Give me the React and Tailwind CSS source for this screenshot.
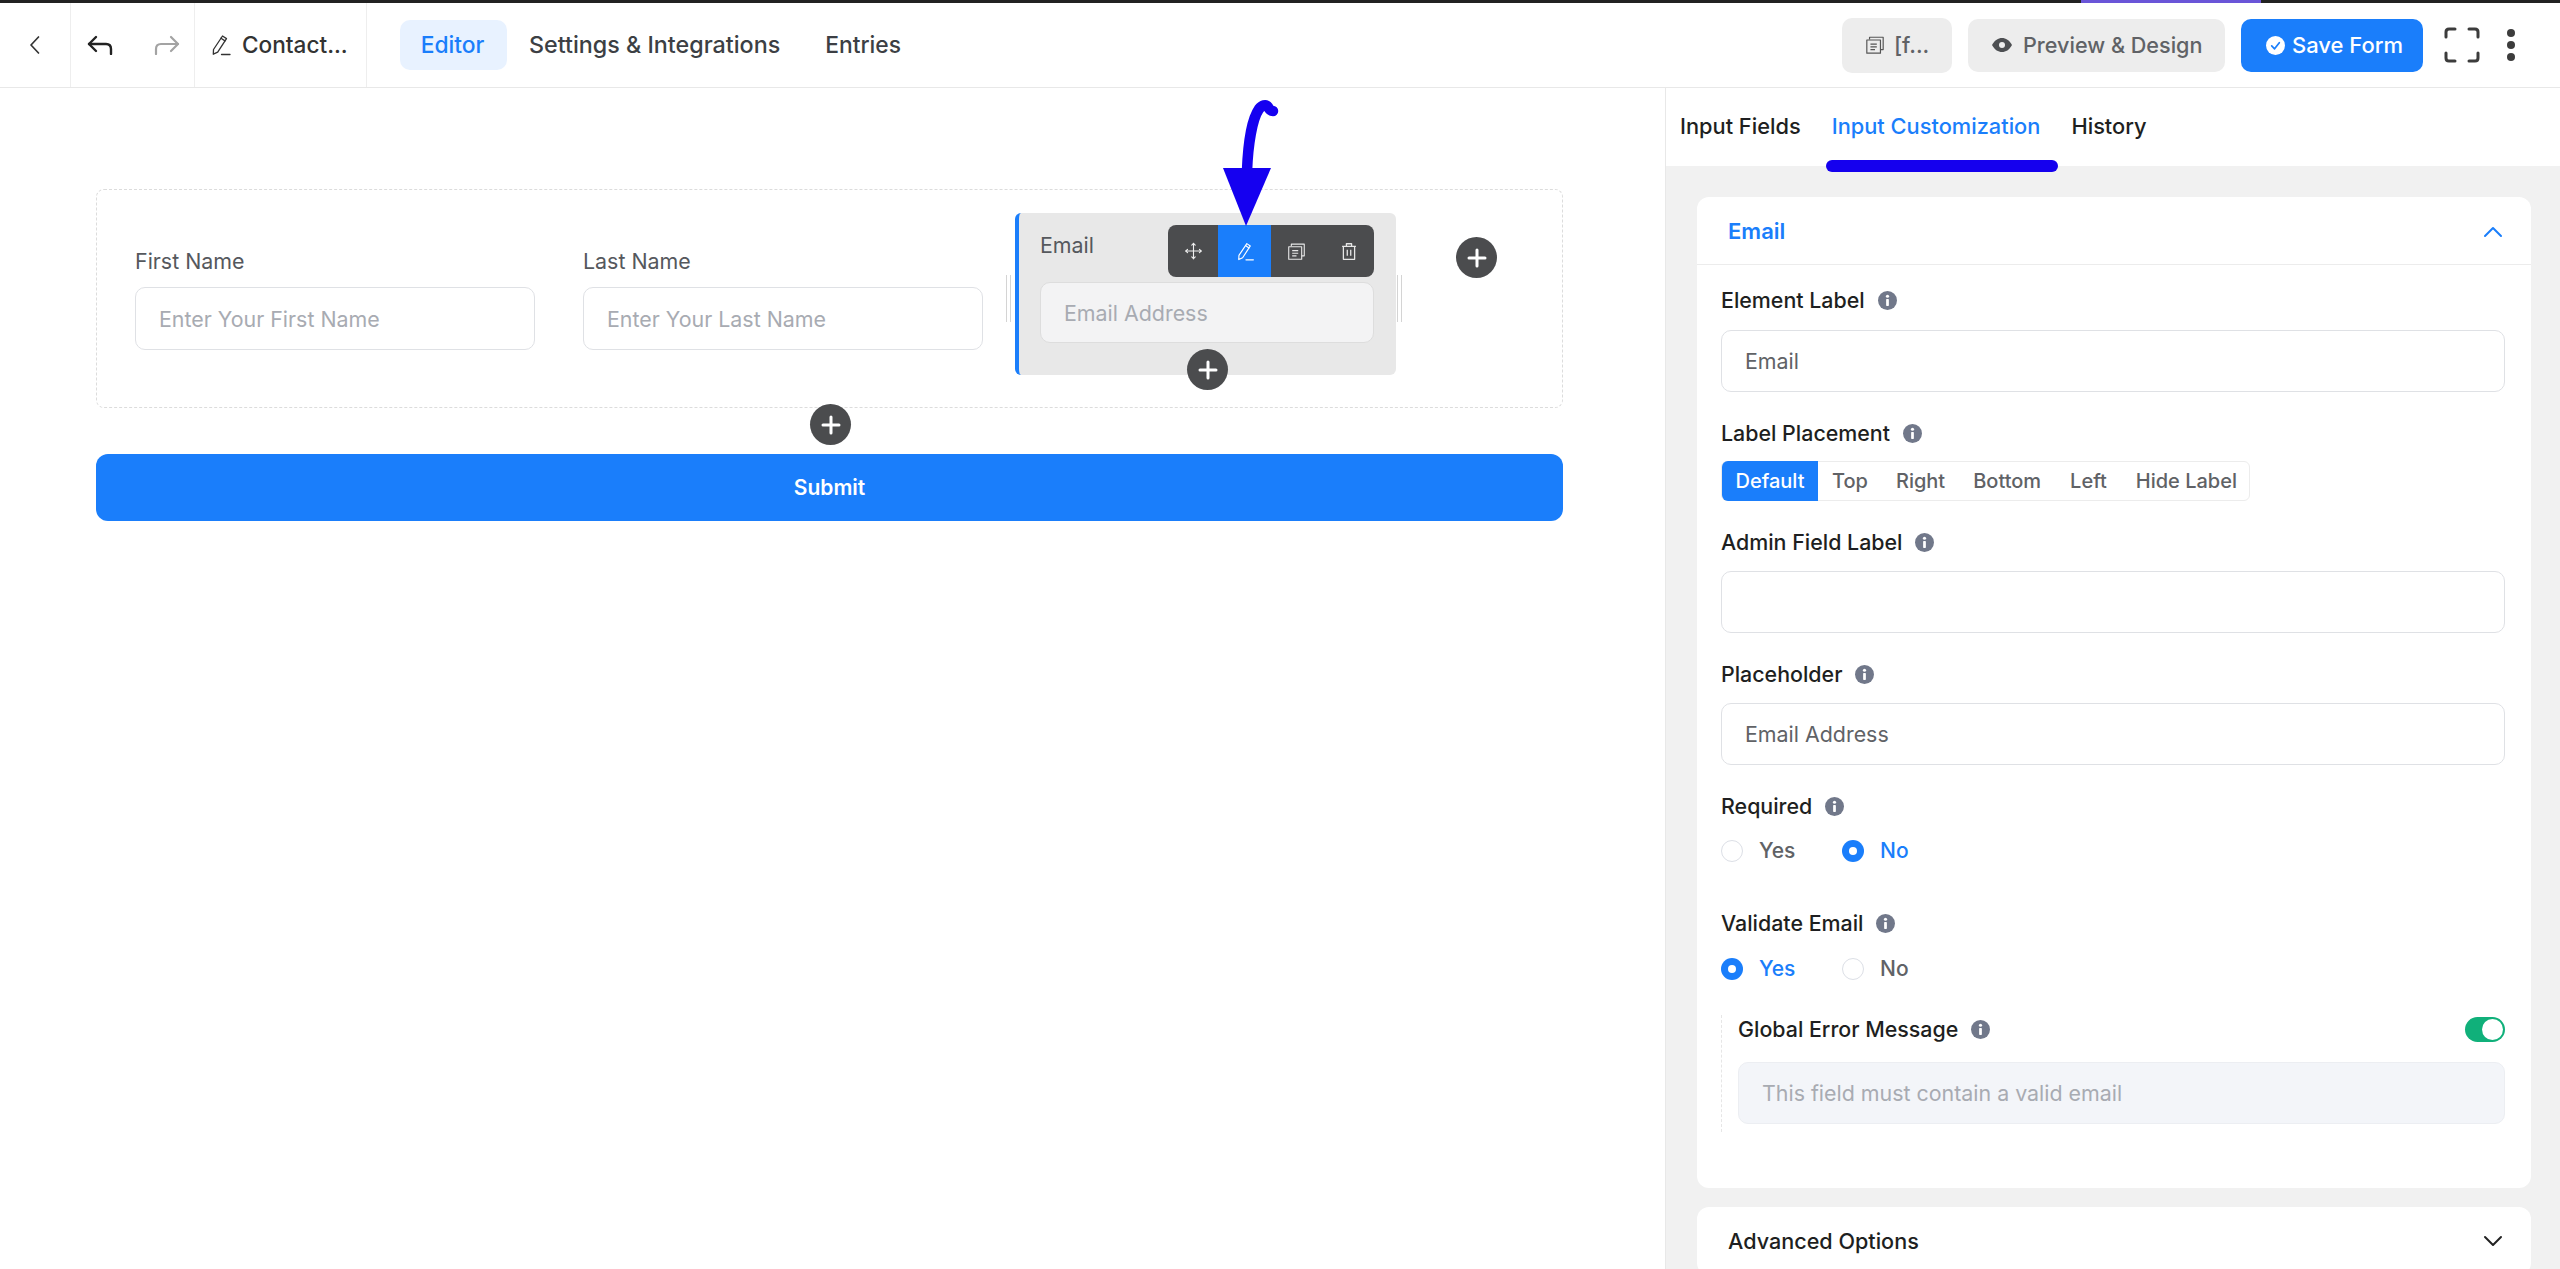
import React from "react";

const Info = () => (
  <svg width="19" height="19" viewBox="0 0 18 18" className="ml-[13px] shrink-0">
    <circle cx="9" cy="9" r="9" fill="#71788a" />
    <circle cx="9" cy="5" r="1.5" fill="#fff" />
    <rect x="7.7" y="7.6" width="2.6" height="6.6" rx="0.6" fill="#fff" />
  </svg>
);

const PencilLine = ({ color = "#333", size = 24 }) => (
  <svg width={size} height={size} viewBox="0 0 24 24" fill="none" stroke={color} strokeWidth="1.3" strokeLinejoin="round" strokeLinecap="round">
    <path d="M4.5 16.5 13.5 3l4 2.6-8.8 13.6-4.4 2z" />
    <path d="M12 5.2l4 2.7" />
    <path d="M12.5 21.5h8.5" />
  </svg>
);

const CopyIcon = ({ color = "#444", size = 22 }) => (
  <svg width={size} height={size} viewBox="0 0 22 22" fill="none" stroke={color} strokeWidth="1.3" strokeLinejoin="round">
    <path d="M5 5V2.5h15V16h-3" />
    <path d="M2 5.5h15V20H2z" />
    <path d="M6 10h7M6 13h7M6 16h5" />
  </svg>
);

const TrashIcon = () => (
  <svg width="18" height="19" viewBox="0 0 20 22" fill="none" stroke="#e6e6e6" strokeWidth="1.5" strokeLinejoin="round">
    <path d="M2 5h16M7 5V2h6v3M3.5 5v15h13V5" />
    <path d="M8 9v7M12 9v7" />
  </svg>
);

const MoveIcon = () => (
  <svg width="17" height="18" viewBox="0 0 20 20" fill="none" stroke="#f0f0f0" strokeWidth="1.3" strokeLinecap="round" strokeLinejoin="round">
    <path d="M10 1v18M1 10h18" />
    <path d="M8 3l2-2 2 2M8 17l2 2 2-2M3 8l-2 2 2 2M17 8l2 2-2 2" />
  </svg>
);

const Plus = ({ className }) => (
  <div className={`absolute flex h-[41px] w-[41px] items-center justify-center rounded-full bg-[#4b4c4e] ${className}`}>
    <svg width="20" height="20" viewBox="0 0 20 20" stroke="#fff" strokeWidth="3" strokeLinecap="round">
      <path d="M10 2v16M2 10h16" />
    </svg>
  </div>
);

const Label = ({ children, className = "" }) => (
  <div className={`flex h-[28px] items-center text-[21.4px] font-medium text-[#1e1f21] ${className}`}>
    {children}
    <Info />
  </div>
);

const Field = ({ children, className = "h-[62px] border-[#dfe1e5] bg-white text-[#606266]" }) => (
  <div className={`flex items-center rounded-[10px] border pl-[23px] pr-[24px] pt-[1px] text-[21.4px] ${className}`}>
    {children}
  </div>
);

const Radio = ({ on, children, w }) => (
  <div className={`flex items-center ${w}`}>
    {on ? (
      <span className="flex h-[22px] w-[22px] items-center justify-center rounded-full bg-[#1a7efb]">
        <span className="h-[8px] w-[8px] rounded-full bg-white" />
      </span>
    ) : (
      <span className="h-[22px] w-[22px] rounded-full border border-[#dcdfe6] bg-white" />
    )}
    <span className={`ml-[16px] text-[21px] font-medium ${on ? "text-[#1a7efb]" : "text-[#606266]"}`}>{children}</span>
  </div>
);

const NameField = ({ label, placeholder }) => (
  <div className="w-[400px] pt-[34px]">
    <div className="flex h-[28px] items-center text-[21.4px] text-[#55585d]">{label}</div>
    <div className="mt-[12px]">
      <Field className="h-[63px] border-[#dfe1e5] bg-white text-[#a8abb2]">{placeholder}</Field>
    </div>
  </div>
);

export default function App() {
  return (
    <div className="h-[1269px] w-[2560px] overflow-hidden bg-white font-['Inter','Liberation_Sans',sans-serif]">
      <div className="h-[3px] bg-[#222222]">
        <div className="ml-[2081px] h-[3px] w-[180px] bg-[#6a55d8]" />
      </div>

      <header className="flex h-[85px] items-stretch border-b border-[#e8e8e8] text-[22px] font-medium">
        <div className="flex w-[71px] items-center justify-center border-r border-[#eeeeee] pr-[1px]">
          <svg width="13" height="20" viewBox="0 0 13 20" fill="none" stroke="#333" strokeWidth="1.7" strokeLinecap="round" strokeLinejoin="round"><path d="M10.5 2 3 10l7.5 8" /></svg>
        </div>
        <div className="flex w-[124px] items-center border-r border-[#eeeeee] pl-[16px]">
          <svg width="27" height="20" viewBox="0 0 27 20" fill="none" stroke="#222" strokeWidth="2.4" strokeLinecap="round" strokeLinejoin="round"><path d="M9 2 2 9l7 7" /><path d="M2 9h17c3 0 5 2 5 5v5" /></svg>
          <svg className="ml-[39px]" width="27" height="20" viewBox="0 0 27 20" fill="none" stroke="#a3a3a3" strokeWidth="2.2" strokeLinecap="round" strokeLinejoin="round"><path d="m18 2 7 7-7 7" /><path d="M25 9H8c-3 0-5 2-5 5v5" /></svg>
        </div>
        <div className="flex w-[172px] items-center border-r border-[#eeeeee] pl-[14px] text-[#333]">
          <PencilLine color="#333" size={24} />
          <span className="ml-[9px] text-[22.6px]">Contact...</span>
        </div>
        <nav className="ml-[33px] flex items-center text-[22.8px]">
          <span className="flex h-[50px] w-[107px] items-center justify-center rounded-[10px] bg-[#e8f2ff] pr-[2px] text-[#1a7efb]">Editor</span>
          <span className="ml-[22px] text-[23.3px] text-[#3c3f44]">Settings &amp; Integrations</span>
          <span className="ml-[45px] text-[#3c3f44]">Entries</span>
        </nav>
        <div className="ml-auto flex items-center pr-[45px]">
          <div className="flex h-[55px] w-[110px] items-center rounded-[10px] bg-[#ededed] pl-[23px] text-[#606266]">
            <CopyIcon color="#555" size={20} />
            <span className="ml-[9px]">[f...</span>
          </div>
          <div className="ml-[16px] flex h-[53px] w-[257px] items-center rounded-[10px] bg-[#ededed] pl-[24px] text-[21.6px] text-[#606266]">
            <svg width="20" height="14" viewBox="0 0 20 14"><path d="M0 7C3 2 6 0 10 0s7 2 10 7c-3 5-6 7-10 7S3 12 0 7z" fill="#4d4f52" /><circle cx="10" cy="7" r="3" fill="#ededed" /></svg>
            <span className="ml-[11px]">Preview &amp; Design</span>
          </div>
          <div className="ml-[16px] flex h-[53px] w-[182px] items-center rounded-[10px] bg-[#1a7efb] pl-[25px] text-white">
            <svg width="19" height="19" viewBox="0 0 20 20"><circle cx="10" cy="10" r="10" fill="#fff" /><path d="m6 10.5 3 3 5-6.5" fill="none" stroke="#1a7efb" strokeWidth="1.8" strokeLinecap="round" strokeLinejoin="round" /></svg>
            <span className="ml-[7px]">Save Form</span>
          </div>
          <svg className="ml-[21px]" width="36" height="36" viewBox="0 0 36 36" fill="none" stroke="#3c3c3c" strokeWidth="3" strokeLinecap="round" strokeLinejoin="round"><path d="M2 10V5q0-3 3-3h6M25 2h6q3 0 3 3v5M34 26v5q0 3-3 3h-6M11 34H5q-3 0-3-3v-5" /></svg>
          <svg className="ml-[27px]" width="8" height="32" viewBox="0 0 8 32" fill="#3c3c3c"><circle cx="4" cy="4" r="4" /><circle cx="4" cy="16" r="4" /><circle cx="4" cy="28" r="4" /></svg>
        </div>
      </header>

      <main className="flex h-[1181px]">
        <section className="relative w-[1665px] pl-[96px] pr-[102px] pt-[101px]">
          <div className="relative flex h-[219px] items-start rounded-[8px] border border-dashed border-[#dcdcdc] pl-[38px] pt-[23px]">
            <NameField label="First Name" placeholder="Enter Your First Name" />
            <div className="ml-[48px]">
              <NameField label="Last Name" placeholder="Enter Your Last Name" />
            </div>

            <div className="relative ml-[32px] h-[162px] w-[381px] rounded-[6px] border-l-[4px] border-[#1a7efb] bg-[#e8e8e8] pl-[21px] pr-[22px] pt-[18px]">
              <div className="flex h-[28px] items-center text-[21.4px] text-[#55585d]">Email</div>
              <div className="mt-[23px] w-[334px]">
                <Field className="h-[61px] border-[#dddddd] bg-[#f3f3f4] text-[#a8abb2]">Email Address</Field>
              </div>

              <div className="absolute left-[149px] top-[12px] flex h-[52px] w-[206px] overflow-hidden rounded-[8px] bg-[#4b4c4e]">
                <div className="flex w-[50px] items-center justify-center"><MoveIcon /></div>
                <div className="flex w-[53px] items-center justify-center bg-[#1a7efb] pl-[2px]"><PencilLine color="#fff" size={21} /></div>
                <div className="flex w-[52px] items-center justify-center pr-[2px]"><CopyIcon color="#e6e6e6" size={19} /></div>
                <div className="flex w-[51px] items-center justify-center"><TrashIcon /></div>
              </div>
              <Plus className="left-[168px] top-[136px]" />
              <div className="absolute -left-[13px] top-[62px] h-[47px] w-[5px] border-x border-[#d4d4d4]" />
              <div className="absolute -right-[6px] top-[62px] h-[47px] w-[5px] border-x border-[#d4d4d4]" />
            </div>

            <Plus className="left-[1359px] top-[47px]" />
          </div>

          <Plus className="left-[810px] top-[316px]" />

          <button className="mt-[46px] flex h-[67px] w-[1467px] items-center justify-center rounded-[12px] bg-[#1a7efb] text-[21px] font-semibold text-white">Submit</button>

          <svg className="absolute left-[1215px] top-[7px]" width="70" height="135" viewBox="0 0 70 135" fill="none">
            <path d="M32 76C33 50 37 24 44 14c3-4 7-5 9-2 1 2 3 4 5 4" stroke="#1500f0" strokeWidth="10.5" strokeLinecap="round" />
            <path d="M8 73h48L31 131z" fill="#1500f0" />
          </svg>
        </section>

        <aside className="relative w-[895px] border-l border-[#e8e8e8] bg-[#f1f1f1]">
          <div className="flex h-[78px] items-center bg-white pb-[2px] pl-[14px] text-[21.8px] font-medium text-[#1e1f21]">
            <span>Input Fields</span>
            <span className="ml-[31px] text-[#1a7efb]">Input Customization</span>
            <span className="ml-[31px]">History</span>
          </div>
          <div className="absolute left-[160px] top-[72px] h-[12px] w-[232px] rounded-full bg-[#1500ee]" />

          <div className="pl-[31px] pr-[29px] pt-[31px]">
            <div className="h-[991px] rounded-[12px] bg-white">
              <div className="flex h-[68px] items-center justify-between border-b border-[#ececec] pl-[31px] pr-[28px] pt-[2px] text-[22px] font-semibold text-[#1a7efb]">
                <span>Email</span>
                <svg width="20" height="12" viewBox="0 0 20 12" fill="none" stroke="#1a7efb" strokeWidth="2" strokeLinecap="round" strokeLinejoin="round"><path d="M2 10l8-8 8 8" /></svg>
              </div>
              <div className="pl-[24px] pr-[26px] pt-[21px]">
                <Label>Element Label</Label>
                <div className="mt-[16px]"><Field>Email</Field></div>

                <Label className="mt-[27px]">Label Placement</Label>
                <div className="mt-[14px] flex h-[40px] w-[529px] items-center rounded-[6px] border border-[#ececec] text-[20px] font-medium text-[#606266]">
                  <span className="flex h-[40px] w-[96px] items-center justify-center rounded-l-[6px] bg-[#1a7efb] text-white">Default</span>
                  <span className="ml-[14px]">Top</span>
                  <span className="ml-[28px]">Right</span>
                  <span className="ml-[28px]">Bottom</span>
                  <span className="ml-[29px]">Left</span>
                  <span className="ml-[29px]">Hide Label</span>
                </div>

                <Label className="mt-[27px]">Admin Field Label</Label>
                <div className="mt-[15px]"><Field /></div>

                <Label className="mt-[27px]">Placeholder</Label>
                <div className="mt-[15px]"><Field>Email Address</Field></div>

                <Label className="mt-[27px]">Required</Label>
                <div className="mt-[17px] flex h-[28px] items-center">
                  <Radio w="w-[121px]">Yes</Radio>
                  <Radio on>No</Radio>
                </div>

                <Label className="mt-[44px]">Validate Email</Label>
                <div className="mt-[18px] flex h-[28px] items-center">
                  <Radio on w="w-[121px]">Yes</Radio>
                  <Radio>No</Radio>
                </div>

                <div className="mt-[32px] border-l border-dashed border-[#e6e6e6] pb-[8px] pl-[16px]">
                  <div className="flex items-center justify-between">
                    <Label>Global Error Message</Label>
                    <span className="flex h-[25px] w-[40px] items-center justify-end rounded-full bg-[#10b07a] pr-[2px]">
                      <span className="h-[21px] w-[21px] rounded-full bg-white" />
                    </span>
                  </div>
                  <div className="mt-[19px]">
                    <Field className="h-[62px] border-[#eceef2] bg-[#f3f5f9] text-[#a8abb2]">This field must contain a valid email</Field>
                  </div>
                </div>
              </div>
            </div>

            <div className="mt-[19px] flex h-[68px] items-center justify-between rounded-[12px] bg-white pl-[31px] pr-[28px] text-[21.6px] font-medium text-[#1e1f21]">
              <span>Advanced Options</span>
              <svg width="20" height="12" viewBox="0 0 20 12" fill="none" stroke="#222" strokeWidth="2" strokeLinecap="round" strokeLinejoin="round"><path d="M2 2l8 8 8-8" /></svg>
            </div>
          </div>
        </aside>
      </main>
    </div>
  );
}
